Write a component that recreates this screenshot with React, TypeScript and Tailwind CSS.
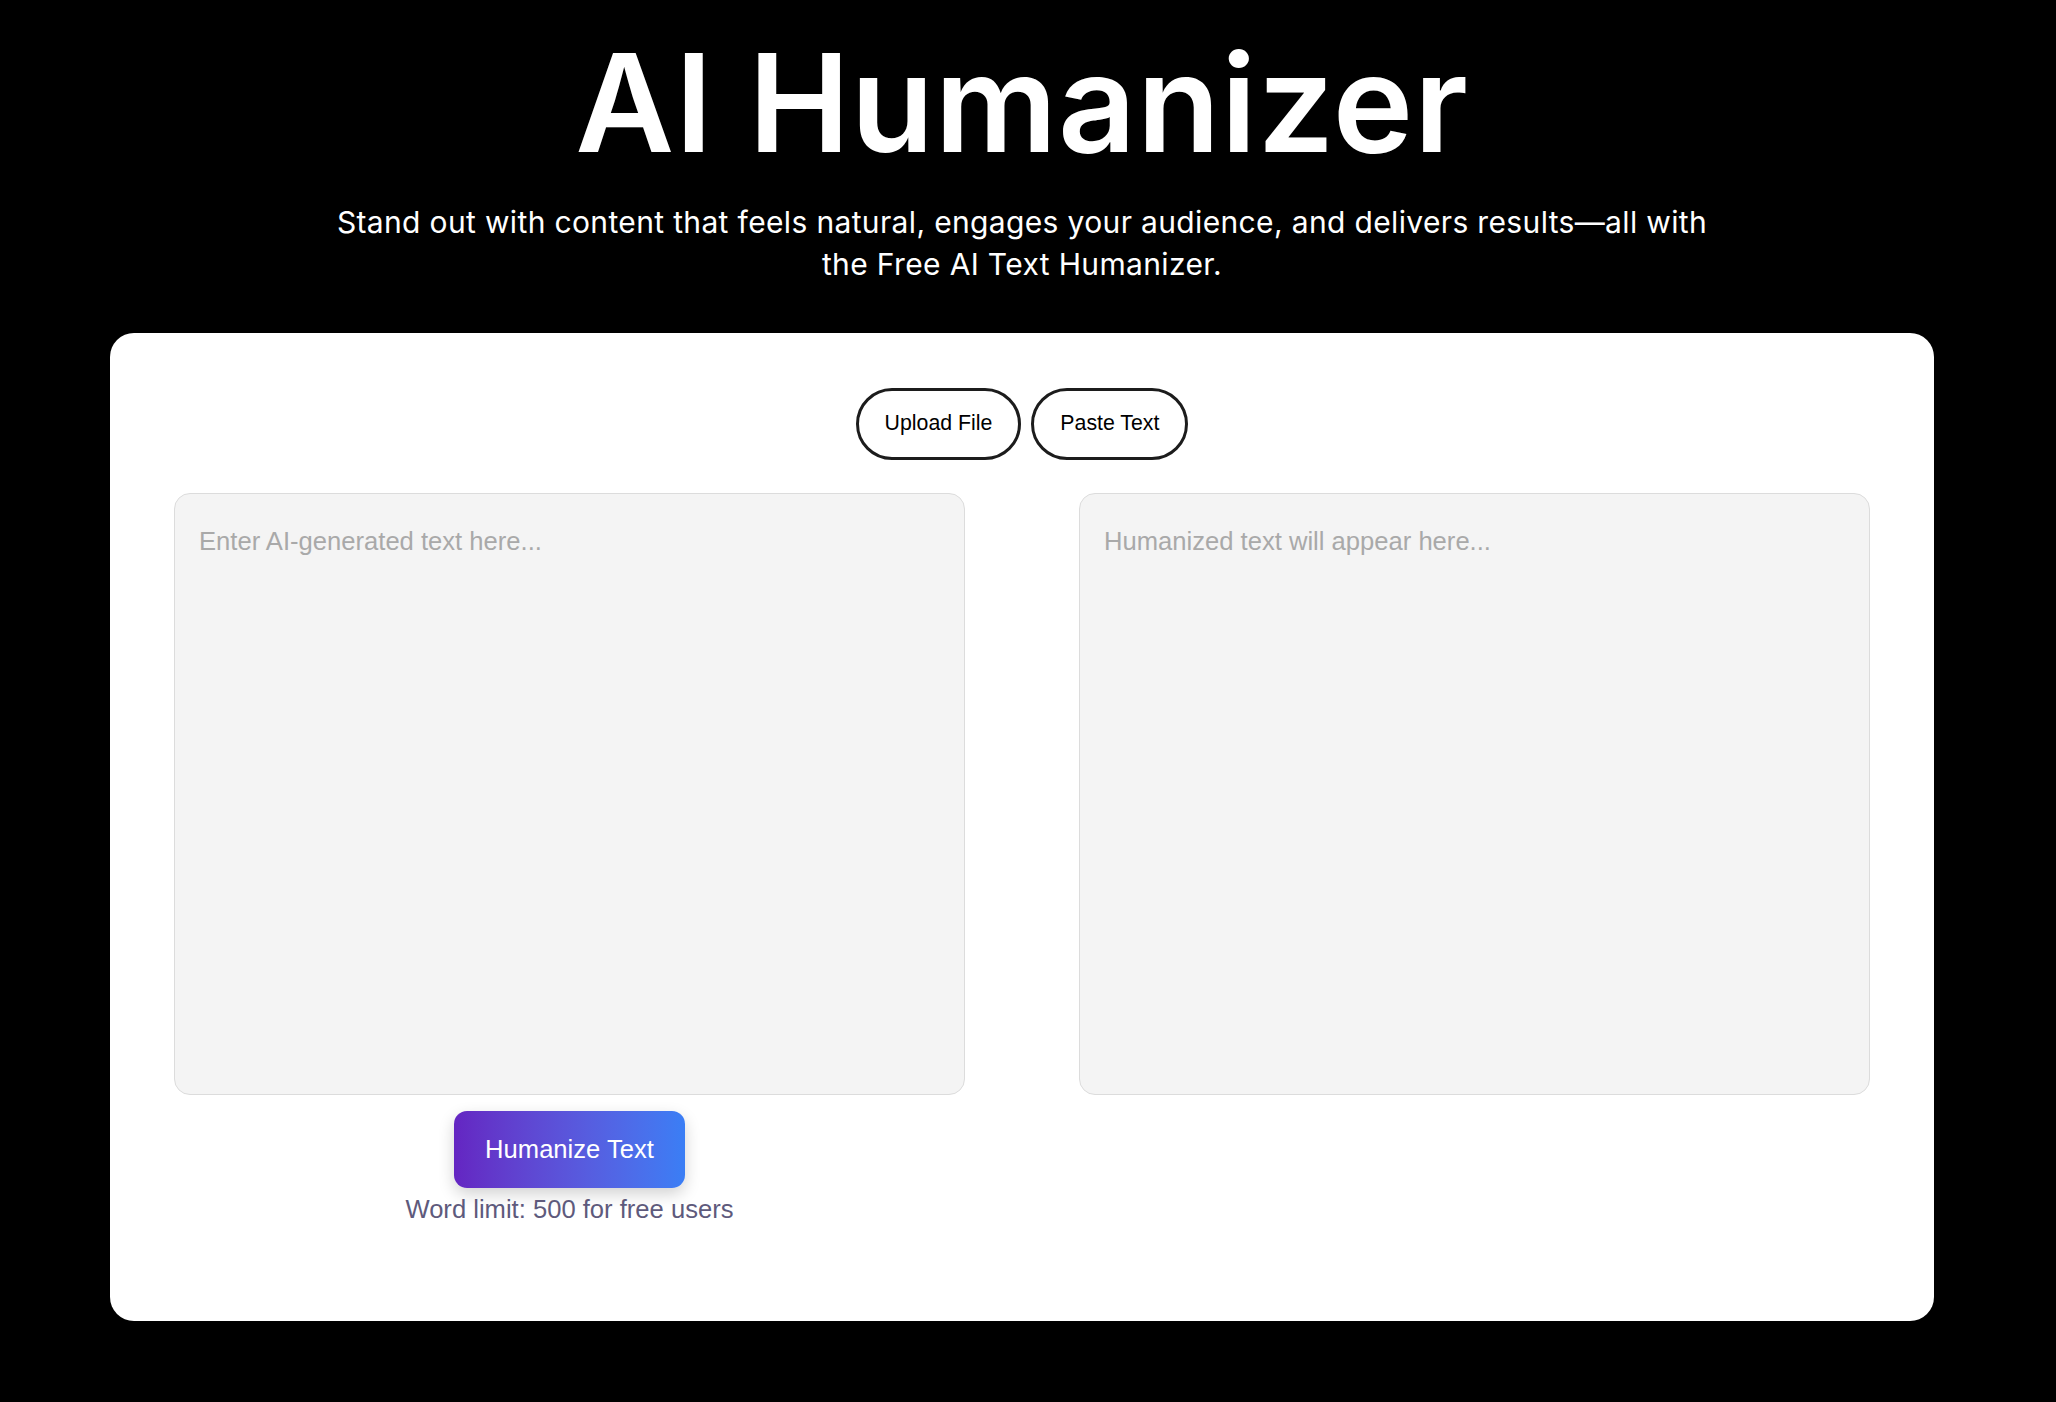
import React from "react";

export default function App() {
  return (
    <div className="min-h-screen w-full bg-black pr-[12px]" style={{ fontFamily: "Inter, 'Liberation Sans', sans-serif" }}>
      <div className="flex flex-col items-center">
        <h1 className="mt-[35px] text-[136px] leading-[136px] font-semibold tracking-[0.8px] text-white" style={{ fontFamily: "Inter, sans-serif" }}>
          AI Humanizer
        </h1>
        <p className="mt-[30px] text-center text-[30px] leading-[42px] tracking-[0.35px] text-white" style={{ fontFamily: "Inter, sans-serif" }}>
          Stand out with content that feels natural, engages your audience, and delivers results—all with
          <br />
          the Free AI Text Humanizer.
        </p>
      </div>

      <div
        className="mx-[110px] mt-[48px] rounded-[24px] bg-white px-[64px] pt-[55px] pb-[93px]"
        style={{ fontFamily: "'Liberation Sans', Arial, sans-serif" }}
      >
        <div className="flex justify-center gap-[10px]">
          <button className="flex h-[72px] items-center rounded-full border-[3px] border-[#1c1c1c] bg-white px-[26px] text-[21.3px] text-black">
            Upload File
          </button>
          <button className="flex h-[72px] items-center rounded-full border-[3px] border-[#1c1c1c] bg-white px-[26px] text-[21.3px] text-black">
            Paste Text
          </button>
        </div>

        <div className="mt-[33px] flex justify-between">
          <div className="flex w-[791px] flex-col items-center">
            <textarea
              className="h-[602px] w-full resize-none rounded-[16px] border border-[#dcdcdc] bg-[#f4f4f4] px-[24px] pt-[28px] text-[25.6px] leading-normal text-[#333] outline-none placeholder:text-[#a9a9a9]"
              placeholder="Enter AI-generated text here..."
            />
            <button className="mt-[16px] flex h-[77px] items-center rounded-[13px] bg-gradient-to-r from-[#6425c2] to-[#3a7ef5] px-[31px] text-[25.6px] text-white shadow-[0_6px_16px_rgba(0,0,0,0.18)]">
              Humanize Text
            </button>
            <p className="mt-[2px] text-[25.6px] leading-normal text-[#5e5a7c]">Word limit: 500 for free users</p>
          </div>
          <div className="flex w-[791px] flex-col">
            <textarea
              readOnly
              className="h-[602px] w-full resize-none rounded-[16px] border border-[#dcdcdc] bg-[#f4f4f4] px-[24px] pt-[28px] text-[25.6px] leading-normal text-[#333] outline-none placeholder:text-[#a9a9a9]"
              placeholder="Humanized text will appear here..."
            />
          </div>
        </div>
      </div>
    </div>
  );
}
